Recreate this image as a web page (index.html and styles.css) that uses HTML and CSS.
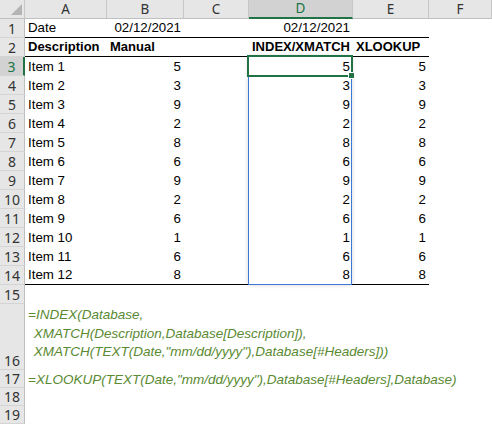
FILE: index.html
```html
<!DOCTYPE html>
<html>
<head>
<meta charset="utf-8">
<link rel="stylesheet" href="styles.css">
</head>
<body>
<div class="sheet">
  <div class="hd corner"><svg width="24" height="18" viewBox="0 0 24 18"><polygon points="22,4 22,15 11,15" fill="#b4b4b4"/></svg></div>
  <div class="hd">A</div><div class="hd">B</div><div class="hd">C</div><div class="hd hsel">D</div><div class="hd">E</div><div class="hd">F</div>

  <div class="rh">1</div><div class="c ln">Date</div><div class="c r ln">02/12/2021</div><div class="c ln"></div><div class="c r ln">02/12/2021</div><div class="c ln"></div><div class="c"></div>
  <div class="rh">2</div><div class="c ln b">Description</div><div class="c ln b">Manual</div><div class="c ln"></div><div class="c ln b">INDEX/XMATCH</div><div class="c ln b">XLOOKUP</div><div class="c"></div>

  <div class="rh rsel">3</div><div class="c">Item 1</div><div class="c r">5</div><div class="c"></div><div class="c r">5</div><div class="c r">5</div><div class="c"></div>
  <div class="rh">4</div><div class="c">Item 2</div><div class="c r">3</div><div class="c"></div><div class="c r">3</div><div class="c r">3</div><div class="c"></div>
  <div class="rh">5</div><div class="c">Item 3</div><div class="c r">9</div><div class="c"></div><div class="c r">9</div><div class="c r">9</div><div class="c"></div>
  <div class="rh">6</div><div class="c">Item 4</div><div class="c r">2</div><div class="c"></div><div class="c r">2</div><div class="c r">2</div><div class="c"></div>
  <div class="rh">7</div><div class="c">Item 5</div><div class="c r">8</div><div class="c"></div><div class="c r">8</div><div class="c r">8</div><div class="c"></div>
  <div class="rh">8</div><div class="c">Item 6</div><div class="c r">6</div><div class="c"></div><div class="c r">6</div><div class="c r">6</div><div class="c"></div>
  <div class="rh">9</div><div class="c">Item 7</div><div class="c r">9</div><div class="c"></div><div class="c r">9</div><div class="c r">9</div><div class="c"></div>
  <div class="rh">10</div><div class="c">Item 8</div><div class="c r">2</div><div class="c"></div><div class="c r">2</div><div class="c r">2</div><div class="c"></div>
  <div class="rh">11</div><div class="c">Item 9</div><div class="c r">6</div><div class="c"></div><div class="c r">6</div><div class="c r">6</div><div class="c"></div>
  <div class="rh">12</div><div class="c">Item 10</div><div class="c r">1</div><div class="c"></div><div class="c r">1</div><div class="c r">1</div><div class="c"></div>
  <div class="rh">13</div><div class="c">Item 11</div><div class="c r">6</div><div class="c"></div><div class="c r">6</div><div class="c r">6</div><div class="c"></div>
  <div class="rh">14</div><div class="c ln">Item 12</div><div class="c r ln">8</div><div class="c ln"></div><div class="c r ln">8</div><div class="c r ln">8</div><div class="c"></div>

  <div class="rh">15</div><div class="span"></div>
  <div class="rh">16</div>
  <div class="span formula multi"><div>=INDEX(Database,</div><div class="ind"> XMATCH(Description,Database[Description]),</div><div class="ind"> XMATCH(TEXT(Date,"mm/dd/yyyy"),Database[#Headers]))</div></div>
  <div class="rh">17</div><div class="span formula single">=XLOOKUP(TEXT(Date,"mm/dd/yyyy"),Database[#Headers],Database)</div>
  <div class="rh">18</div><div class="span"></div>
  <div class="rh">19</div><div class="span"></div>

  <div class="range"></div>
  <div class="sel"></div>
  <div class="handle"></div>
</div>
</body>
</html>
```

FILE: styles.css
```css
* { box-sizing: border-box; }
html, body { margin: 0; padding: 0; background: #ffffff; overflow: hidden; }

.sheet {
  position: relative;
  display: grid;
  grid-template-columns: 25px 82px 77px 65px 104px 76px 1fr;
  grid-template-rows: 19px repeat(15, 19px) 66px 18px 18px 18px;
  width: 492px;
  height: 424px;
  font-family: "Liberation Sans", Arial, sans-serif;
  font-size: 13.3px;
  color: #000;
}

.hd {
  background: #e6e6e6;
  border-right: 1px solid #c6c6c6;
  border-bottom: 1px solid #bfbfbf;
  display: flex;
  align-items: center;
  justify-content: center;
  font-family: "Noto Sans", "Open Sans", sans-serif;
  font-size: 13.5px;
  line-height: 1;
  color: #333;
  padding-top: 1px;
}
.corner { padding: 0; display: block; }
.corner svg { display: block; }
.hsel {
  background: #d2d2d2;
  color: #217346;
  border-bottom: 2px solid #217346;
}

.rh {
  background: #e6e6e6;
  border-right: 1px solid #bfbfbf;
  border-bottom: 1px solid #d4d4d4;
  display: flex;
  align-items: flex-end;
  justify-content: center;
  font-family: "Noto Sans", "Open Sans", sans-serif;
  font-size: 14px;
  line-height: 17px;
  color: #333;
}
.rsel {
  background: #d2d2d2;
  color: #217346;
  border-right: 2px solid #217346;
}

.c {
  display: flex;
  align-items: flex-end;
  padding: 0 3px 1px 3px;
  line-height: 17px;
  white-space: nowrap;
  overflow: visible;
}
.r { justify-content: flex-end; }
.b { font-weight: bold; font-size: 13px; }
.ln { border-bottom: 1px solid #000; }

.span { grid-column: 2 / -1; }
.formula {
  color: #5a8a32;
  font-style: italic;
  font-size: 13.5px;
  white-space: pre;
  padding-left: 3px;
}
.multi { padding-top: 2px; line-height: 18.5px; }
.single { padding-top: 1px; line-height: 18px; }
.ind { padding-left: 2px; }

.range {
  position: absolute;
  left: 248px;
  top: 56px;
  width: 104px;
  height: 229px;
  border: 1px solid #3c78d8;
  box-shadow: 0 0 4px rgba(0, 0, 0, 0.18);
}
.sel {
  position: absolute;
  left: 247px;
  top: 55px;
  width: 106px;
  height: 22px;
  border: 2px solid #217346;
}
.handle {
  position: absolute;
  left: 348px;
  top: 72px;
  width: 7px;
  height: 7px;
  background: #217346;
  border: 1px solid #ffffff;
}
```
